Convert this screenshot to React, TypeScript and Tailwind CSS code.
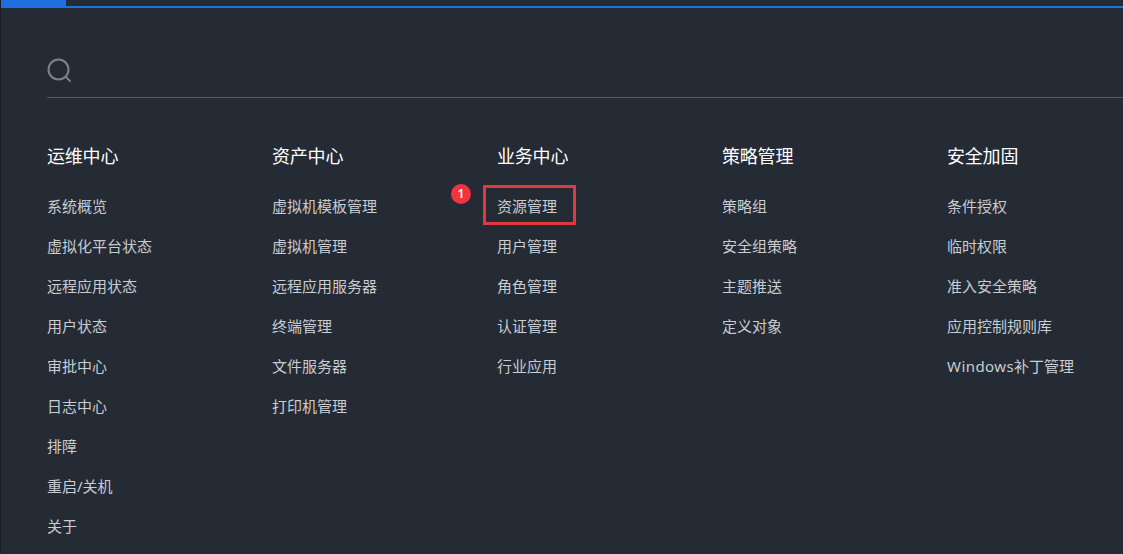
const cols = [
  { t: "运维中心", w: "w-[225px]", items: ["系统概览", "虚拟化平台状态", "远程应用状态", "用户状态", "审批中心", "日志中心", "排障", "重启/关机", "关于"] },
  { t: "资产中心", w: "w-[225px]", items: ["虚拟机模板管理", "虚拟机管理", "远程应用服务器", "终端管理", "文件服务器", "打印机管理"] },
  { t: "业务中心", w: "w-[225px]", items: ["资源管理", "用户管理", "角色管理", "认证管理", "行业应用"] },
  { t: "策略管理", w: "w-[225px]", items: ["策略组", "安全组策略", "主题推送", "定义对象"] },
  { t: "安全加固", w: "w-[176px]", items: ["条件授权", "临时权限", "准入安全策略", "应用控制规则库", "Windows补丁管理"] },
];

export default function App() {
  return (
    <div
      className="w-[1123px] h-[554px] overflow-hidden bg-[#242b35] border-l border-[#1b2028]"
      style={{ fontFamily: '"Noto Sans", "Noto Sans CJK SC", sans-serif' }}
    >
      <div className="h-2 border-b-2 border-[#1f6fe0] relative">
        <div className="absolute left-0 top-0 w-[65px] h-2 bg-[#1f6fe0]" />
      </div>
      <div className="ml-[46px]">
        <div className="h-[90px] border-b border-[#55585f] flex items-end pb-[13px]">
          <svg width="26" height="26" viewBox="0 0 26 26" fill="none" stroke="#7d8288" strokeWidth="2" strokeLinecap="round">
            <circle cx="11.5" cy="11.5" r="10" />
            <path d="M19 19 L23 23" />
          </svg>
        </div>
        <div className="flex pt-[45px]">
          {cols.map((c) => (
            <div key={c.t} className={c.w + " shrink-0"}>
              <div className="h-[26px] leading-[26px] text-[18px] tracking-[-0.2px] text-white mb-[17px]">{c.t}</div>
              {c.items.map((i) => (
                <div key={i} className="h-10 leading-10 text-[15px] text-[#c9ccd0] whitespace-nowrap relative">
                  {i === "Windows补丁管理" ? (
                    <>
                      <span className="tracking-[0.43px]">Windows</span>补丁管理
                    </>
                  ) : (
                    i
                  )}
                  {i === "资源管理" && (
                    <>
                      <div className="absolute left-[-14px] top-[-1px] w-[93px] h-10 border-[3px] border-[#e0393e]" />
                      <div className="absolute left-[-46px] top-[-2px] w-5 h-5 rounded-full bg-[#f5333f] text-white text-[12px] font-semibold leading-5 text-center">1</div>
                    </>
                  )}
                </div>
              ))}
            </div>
          ))}
        </div>
      </div>
    </div>
  );
}
